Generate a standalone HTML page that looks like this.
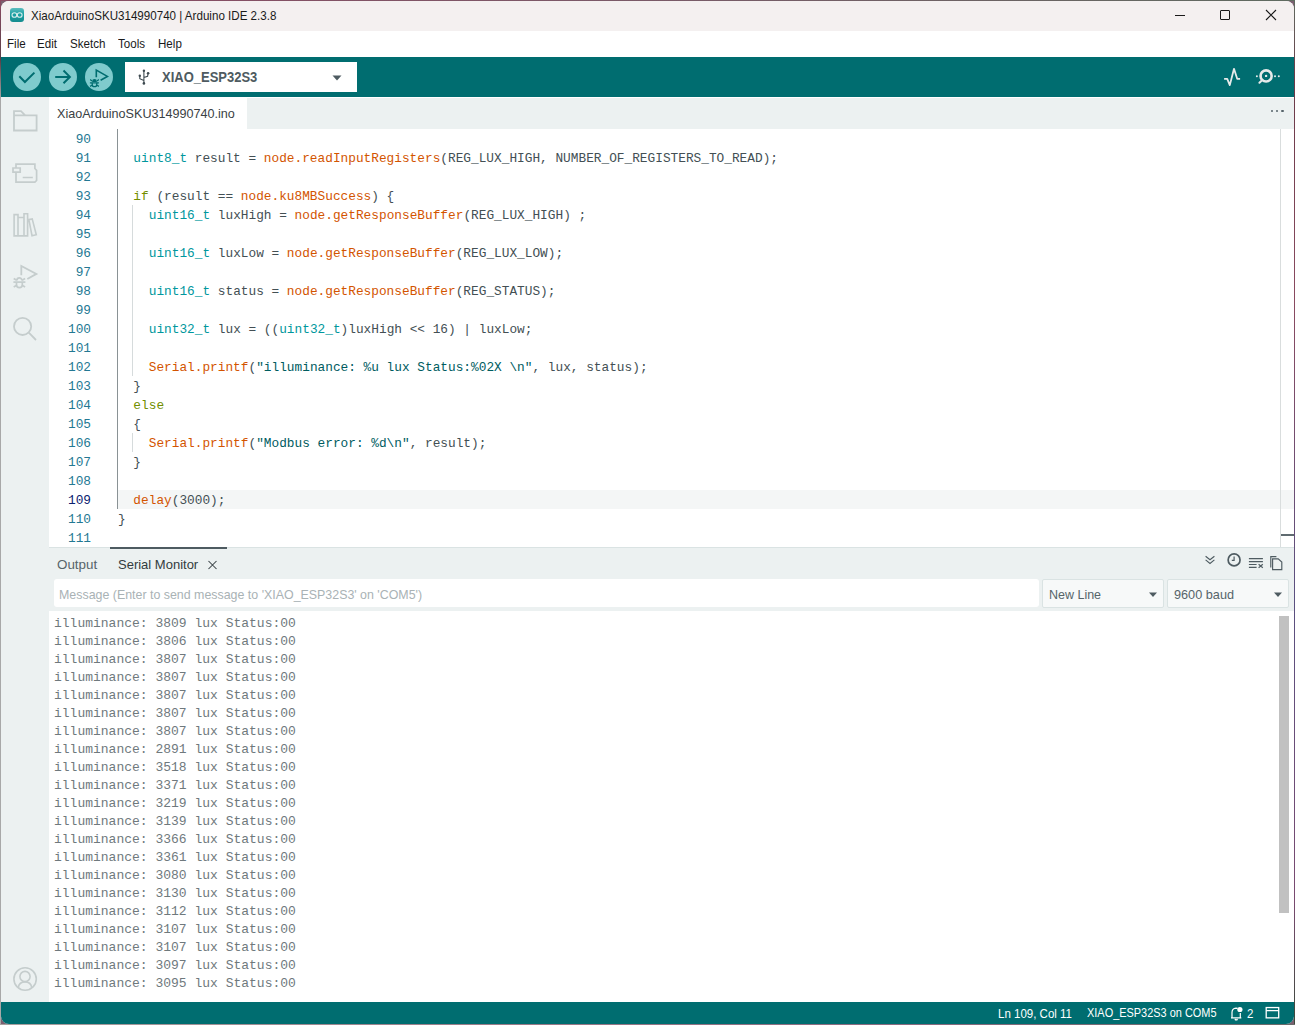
<!DOCTYPE html>
<html><head><meta charset="utf-8">
<style>
*{margin:0;padding:0;box-sizing:border-box}
html,body{width:1295px;height:1025px;overflow:hidden}
body{background:#7a6070;font-family:"Liberation Sans",sans-serif;position:relative}
.a{position:absolute}
#win{position:absolute;left:0;top:0;width:1295px;height:1025px;clip-path:inset(1px 1px 1px 1px round 8px);background:#fff}
#title{left:0;top:0;width:1295px;height:31px;background:#f4f0f0}
#menu{left:0;top:31px;width:1295px;height:26px;background:#fff}
#toolbar{left:0;top:57px;width:1295px;height:40px;background:#006d70}
#side{left:0;top:97px;width:49px;height:905px;background:#ecf1f1}
#tabbar{left:49px;top:98px;width:1246px;height:31px;background:#ecf1f1}
#editor{left:49px;top:129px;width:1246px;height:418px;background:#fff}
#panel{left:49px;top:547px;width:1246px;height:64px;background:#ecf1f1;border-top:1px solid #dae3e3}
#serial{left:50px;top:611px;width:1245px;height:391px;background:#fff}
#status{left:0;top:1002px;width:1295px;height:23px;background:#006d70}
.mono{font-family:"Liberation Mono",monospace}
.t{white-space:pre;line-height:1}
.ln{height:19px;line-height:19px;font-size:13.4px;text-align:right;color:#237893;padding-top:0.7px}
.ln.cur{color:#0b216f}
.cl{height:19px;line-height:19px;font-size:13.4px;white-space:pre;color:#434f54;padding-top:0.7px}
.ty{color:#00979d}.fn{color:#d35400}.kw{color:#728e00}.st{color:#005c5f}
.sl{height:18px;line-height:18px;font-size:13px;white-space:pre;color:#6f797d}
</style></head><body>
<div class="a" style="left:0;top:0;width:1px;height:1025px;background:linear-gradient(180deg,#8a4a62 0px,#5a4048 60px,#a8a8a8 100px,#a8a8a8 100%)"></div>
<div class="a" style="left:0;top:0;width:1295px;height:1px;background:linear-gradient(90deg,#8a4a62,#7a5a68 50%,#5f6b60)"></div>
<div class="a" style="left:1294px;top:0;width:1px;height:1025px;background:linear-gradient(180deg,#5f6b60 0px,#6a3a48 80px,#8a4a60 300px,#5a5080 600px,#7a4a70 900px,#3a4a3a 1025px)"></div>
<div class="a" style="left:0;top:1024px;width:1295px;height:1px;background:linear-gradient(90deg,#a8a0a0,#9a7a88 40%,#8a6a80 70%,#6a6a6a)"></div>
<div id="win">
  <div class="a" id="title">
    <!-- arduino icon -->
    <div class="a" style="left:10px;top:8px;width:14px;height:14px;border-radius:3px;background:linear-gradient(#5dbcbe,#1ba0a3 45%,#168c8f)"></div>
    <svg class="a" style="left:10px;top:8px" width="14" height="14" viewBox="0 0 14 14"><g fill="none" stroke="#d5eded" stroke-width="1.1"><ellipse cx="4.4" cy="7" rx="2.4" ry="2.3"/><ellipse cx="9.7" cy="7" rx="2.4" ry="2.3"/></g></svg>
    <div class="a t" style="left:31px;top:8.5px;font-size:13.3px;transform:scaleX(0.872);transform-origin:0 0;color:#1a1a1a">XiaoArduinoSKU314990740 | Arduino IDE 2.3.8</div>
    <!-- window controls -->
    <div class="a" style="left:1175px;top:15px;width:10px;height:1px;background:#1a1a1a"></div>
    <div class="a" style="left:1220px;top:10px;width:10px;height:10px;border:1px solid #1a1a1a;border-radius:1px"></div>
    <svg class="a" style="left:1265px;top:9px" width="12" height="12" viewBox="0 0 12 12"><path d="M1 1L11 11M11 1L1 11" stroke="#1a1a1a" stroke-width="1.1"/></svg>
  </div>
  <div class="a" id="menu">
    <div class="a t" style="left:7px;top:5.8px;font-size:13.2px;transform:scaleX(0.879);transform-origin:0 0;color:#1a1a1a">File</div>
    <div class="a t" style="left:37px;top:5.8px;font-size:13.2px;transform:scaleX(0.879);transform-origin:0 0;color:#1a1a1a">Edit</div>
    <div class="a t" style="left:70px;top:5.8px;font-size:13.2px;transform:scaleX(0.879);transform-origin:0 0;color:#1a1a1a">Sketch</div>
    <div class="a t" style="left:118px;top:5.8px;font-size:13.2px;transform:scaleX(0.879);transform-origin:0 0;color:#1a1a1a">Tools</div>
    <div class="a t" style="left:158px;top:5.8px;font-size:13.2px;transform:scaleX(0.879);transform-origin:0 0;color:#1a1a1a">Help</div>
  </div>
  <div class="a" id="toolbar">

    <div class="a" style="left:13px;top:6px;width:28px;height:28px;border-radius:50%;background:#7fcbcd"></div>
    <div class="a" style="left:49px;top:6px;width:28px;height:28px;border-radius:50%;background:#7fcbcd"></div>
    <div class="a" style="left:85px;top:6px;width:28px;height:28px;border-radius:50%;background:#7fcbcd"></div>
    <svg class="a" style="left:0;top:0" width="130" height="40" viewBox="0 57 130 40">
      <path d="M19.3 76.3L24.9 82L34.4 72.6" fill="none" stroke="#006d70" stroke-width="2"/>
      <path d="M55.2 76.9H70.2M63.5 70.5L69.9 76.9L63.5 83.3" fill="none" stroke="#006d70" stroke-width="2"/>
      <path d="M96.3 77.3V70.1L107.4 76.4L100.6 80.3" fill="none" stroke="#006d70" stroke-width="1.6" stroke-linejoin="miter"/>
      <g fill="none" stroke="#006d70" stroke-width="1.3">
        <path d="M92.8 81.4A1.7 1.7 0 0 1 96.2 81.4Z" fill="#006d70"/>
        <path d="M89.9 82.8H98.9"/>
        <path d="M92.2 82.8V84.4A2.3 2.3 0 0 0 96.8 84.4V82.8"/>
        <path d="M90.2 79.6L91.9 81M98.8 79.6L97.1 81M90.1 86.4L92 85.2M98.9 86.4L97 85.2"/>
      </g>
    </svg>
    <div class="a" style="left:125px;top:5px;width:232px;height:30px;background:#fff"></div>
    <svg class="a" style="left:137px;top:12px" width="14" height="16" viewBox="0 0 14 16"><g fill="none" stroke="#3e4a50" stroke-width="1.1"><path d="M6.9 1.6V14.4M2.8 6.8V9.7L6.9 11.6M11.1 4.2L10.6 7.3L6.9 8.6"/></g><g fill="#3e4a50"><circle cx="6.9" cy="1.7" r="1.2"/><circle cx="6.9" cy="14.4" r="1.3"/><circle cx="2.8" cy="6.8" r="1.2"/><circle cx="11.1" cy="4.3" r="1.3"/></g></svg>
    <div class="a t" style="left:162px;top:13.8px;font-size:13.9px;font-weight:700;transform:scaleX(0.935);transform-origin:0 0;color:#4e5b61">XIAO_ESP32S3</div>
    <svg class="a" style="left:332px;top:18px" width="10" height="6" viewBox="0 0 10 6"><path d="M0.5 0.5H9.5L5 5.5Z" fill="#4e5b61"/></svg>
    <svg class="a" style="left:1220px;top:9px" width="24" height="22" viewBox="0 0 24 22"><path d="M4.1 12.8H7.2L9.8 19.1L14 2.8L17.2 12.8H20.1" fill="none" stroke="#e6eaea" stroke-width="1.8" stroke-linejoin="round" stroke-linecap="butt"/></svg>
    <svg class="a" style="left:1252px;top:9px" width="32" height="22" viewBox="0 0 32 22"><g fill="none" stroke="#e6eaea"><circle cx="14.1" cy="9.9" r="5.55" stroke-width="2.6"/><path d="M10.3 14L7.4 16.8" stroke-width="2" stroke-linecap="round"/></g><g fill="#e6eaea"><circle cx="14.1" cy="9.9" r="1.2"/><circle cx="4.9" cy="10.3" r="1"/><circle cx="23" cy="10.3" r="1"/><circle cx="26.8" cy="10.3" r="1"/></g></svg>
  </div>
  <div class="a" id="side">

    <svg class="a" style="left:0;top:0" width="49" height="905" viewBox="0 97 49 905">
      <g fill="none" stroke="#c5cdcd" stroke-width="2" stroke-linejoin="miter">
        <path d="M14 130.5V111.1H21L25.2 115.3H36.6V130.5Z M14 115.3H25.2" stroke-width="1.8"/>
        <path d="M16 167.8V164.1H34.9V168.5L36.6 170.3V180.5L34.9 182.2H16V172.1 M13 168H20.2V172.1H13Z M22.7 177.5H32.8" stroke-width="1.7"/>
        <path d="M14.1 235.9V214.6H18V235.9Z M18 217.5H24V235.9H14.1 M24 235.9V213.8H27.6V235.9Z M28.9 219.6L32.2 218.9L36.3 234.7L32 235.7Z" stroke-width="1.6"/>
        <path d="M14.5 341" stroke="none"/>
        <circle cx="22.6" cy="326.4" r="8.6" stroke-width="1.8"/>
        <path d="M28.8 332.6L36 340" stroke-width="1.8"/>
      </g>
      <g fill="none" stroke="#c5cdcd" stroke-width="1.8">
        <path d="M21.3 275.3V265.9L36.4 273.9L27.3 279"/>
      </g>
      <g fill="none" stroke="#c5cdcd" stroke-width="1.7">
        <path d="M16.9 280.4A2.5 2.5 0 0 1 21.9 280.4"/>
        <path d="M13.4 282.1H25.4"/>
        <path d="M16.5 282.1V284.7A2.9 2.9 0 0 0 22.3 284.7V282.1"/>
        <path d="M13.7 278.5L16.7 280.3M25.1 278.5L22.1 280.3M13.7 287L16.7 285.3M25.1 287L22.1 285.3"/>
      </g>
      <g fill="none" stroke="#c5cdcd" stroke-width="1.6">
        <circle cx="25.1" cy="979" r="11.2"/>
        <circle cx="25" cy="976.5" r="5.1"/>
        <path d="M18.2 987.6C19 983.5 21.5 981.9 25 981.9C28.5 981.9 31 983.5 31.8 987.6"/>
      </g>
    </svg>
  </div>
  <div class="a" id="tabbar">

    <div class="a" style="left:0;top:-1px;width:198px;height:32px;background:#fff"></div>
    <div class="a t" style="left:8px;top:10px;font-size:12.6px;color:#3a4144">XiaoArduinoSKU314990740.ino</div>
    <div class="a" style="left:1222px;top:12.2px;width:2.2px;height:2.2px;border-radius:50%;background:#56636a"></div>
    <div class="a" style="left:1227.2px;top:12.2px;width:2.2px;height:2.2px;border-radius:50%;background:#56636a"></div>
    <div class="a" style="left:1232.4px;top:12.2px;width:2.2px;height:2.2px;border-radius:50%;background:#56636a"></div>
  </div>
  <div class="a" id="editor">

    <div class="a" style="left:69px;top:361px;width:1177px;height:19px;background:#f4f6f6"></div>
    <div class="a" style="left:68px;top:0;width:1px;height:380px;background:#8a9295"></div>
    <div class="a" style="left:83px;top:76px;width:1px;height:171px;background:#d6dbdc"></div>
    <div class="a" style="left:83px;top:304px;width:1px;height:19px;background:#d6dbdc"></div>
    <div class="a" style="left:1231px;top:0;width:1px;height:418px;background:#d9dddd"></div>
    <div class="a" style="left:1232px;top:405px;width:14px;height:2px;background:#5f6b70"></div>
    <div class="a mono" id="lnums" style="left:0;top:0;width:42px;transform:scaleX(0.955);transform-origin:100% 0">
<div class="ln">90</div>
<div class="ln">91</div>
<div class="ln">92</div>
<div class="ln">93</div>
<div class="ln">94</div>
<div class="ln">95</div>
<div class="ln">96</div>
<div class="ln">97</div>
<div class="ln">98</div>
<div class="ln">99</div>
<div class="ln">100</div>
<div class="ln">101</div>
<div class="ln">102</div>
<div class="ln">103</div>
<div class="ln">104</div>
<div class="ln">105</div>
<div class="ln">106</div>
<div class="ln">107</div>
<div class="ln">108</div>
<div class="ln cur">109</div>
<div class="ln">110</div>
<div class="ln">111</div>
    </div>
    <div class="a mono" id="code" style="left:68.5px;top:0;transform:scaleX(0.955);transform-origin:0 0">
<div class="cl"></div>
<div class="cl">  <span class="ty">uint8_t</span> result = <span class="fn">node.readInputRegisters</span>(REG_LUX_HIGH, NUMBER_OF_REGISTERS_TO_READ);</div>
<div class="cl"></div>
<div class="cl">  <span class="kw">if</span> (result == <span class="fn">node.ku8MBSuccess</span>) {</div>
<div class="cl">    <span class="ty">uint16_t</span> luxHigh = <span class="fn">node.getResponseBuffer</span>(REG_LUX_HIGH) ;</div>
<div class="cl"></div>
<div class="cl">    <span class="ty">uint16_t</span> luxLow = <span class="fn">node.getResponseBuffer</span>(REG_LUX_LOW);</div>
<div class="cl"></div>
<div class="cl">    <span class="ty">uint16_t</span> status = <span class="fn">node.getResponseBuffer</span>(REG_STATUS);</div>
<div class="cl"></div>
<div class="cl">    <span class="ty">uint32_t</span> lux = ((<span class="ty">uint32_t</span>)luxHigh &lt;&lt; 16) | luxLow;</div>
<div class="cl"></div>
<div class="cl">    <span class="fn">Serial.printf</span>(<span class="st">"illuminance: %u lux Status:%02X \n"</span>, lux, status);</div>
<div class="cl">  }</div>
<div class="cl">  <span class="kw">else</span></div>
<div class="cl">  {</div>
<div class="cl">    <span class="fn">Serial.printf</span>(<span class="st">"Modbus error: %d\n"</span>, result);</div>
<div class="cl">  }</div>
<div class="cl"></div>
<div class="cl">  <span class="fn">delay</span>(3000);</div>
<div class="cl">}</div>
<div class="cl"></div>
    </div>
  </div>
  <div class="a" id="panel">

    <div class="a" style="left:61px;top:-1px;width:117px;height:2px;background:#4e5b61"></div>
    <div class="a t" style="left:8px;top:10px;font-size:13.4px;color:#56646a">Output</div>
    <div class="a t" style="left:69px;top:10.4px;font-size:13px;color:#333c40">Serial Monitor</div>
    <svg class="a" style="left:158px;top:11px" width="11" height="11" viewBox="0 0 11 11"><path d="M1.5 2L9.5 10M9.5 2L1.5 10" stroke="#333c40" stroke-width="1.05"/></svg>
    <div class="a" style="left:5px;top:31px;width:985px;height:28px;background:#fff;border-radius:3px"></div>
    <div class="a t" style="left:10px;top:40.2px;font-size:13.1px;transform:scaleX(0.947);transform-origin:0 0;color:#a9b2b5">Message (Enter to send message to 'XIAO_ESP32S3' on 'COM5')</div>
    <div class="a" style="left:993px;top:31px;width:122px;height:29px;background:#f7f9f9;border:1px solid #dae3e3;border-radius:2px"></div>
    <div class="a t" style="left:1000px;top:40.2px;font-size:13.2px;transform:scaleX(0.947);transform-origin:0 0;color:#56646a">New Line</div>
    <svg class="a" style="left:1099px;top:44px" width="10" height="6" viewBox="0 0 10 6"><path d="M1 0.5H9L5 5Z" fill="#4e5b61"/></svg>
    <div class="a" style="left:1118px;top:31px;width:122px;height:29px;background:#f7f9f9;border:1px solid #dae3e3;border-radius:2px"></div>
    <div class="a t" style="left:1125px;top:40.2px;font-size:13.4px;transform:scaleX(0.948);transform-origin:0 0;color:#56646a">9600 baud</div>
    <svg class="a" style="left:1224px;top:44px" width="10" height="6" viewBox="0 0 10 6"><path d="M1 0.5H9L5 5Z" fill="#4e5b61"/></svg>
    <svg class="a" style="left:1150px;top:0" width="96" height="25" viewBox="1199 548 96 25">
      <g fill="none" stroke="#4e5b61" stroke-width="1.15">
        <path d="M1205.6 556.3L1210 559.8L1214.4 556.3M1205.6 559.9L1210 563.4L1214.4 559.9"/>
        <circle cx="1234.1" cy="559.9" r="5.95" stroke-width="1.7"/>
        <path d="M1234.1 556.6V560.4H1231.8" stroke-width="1.2"/>
        <path d="M1248.9 558.6H1262.9M1248.9 561.6H1262.9M1248.9 564.5H1256.6M1248.9 567.4H1256.6"/>
        <path d="M1258.6 564.2L1262.8 567.8M1262.8 564.2L1258.6 567.8"/>
        <path d="M1270.8 567.4V556.6H1276.4M1272.6 569.6V558.8H1278.2L1281.8 562V569.6Z"/>
      </g>
    </svg>
  </div>
  <div class="a" id="serial">

    <div class="a mono" style="left:4px;top:4px">
<div class="sl">illuminance: 3809 lux Status:00</div>
<div class="sl">illuminance: 3806 lux Status:00</div>
<div class="sl">illuminance: 3807 lux Status:00</div>
<div class="sl">illuminance: 3807 lux Status:00</div>
<div class="sl">illuminance: 3807 lux Status:00</div>
<div class="sl">illuminance: 3807 lux Status:00</div>
<div class="sl">illuminance: 3807 lux Status:00</div>
<div class="sl">illuminance: 2891 lux Status:00</div>
<div class="sl">illuminance: 3518 lux Status:00</div>
<div class="sl">illuminance: 3371 lux Status:00</div>
<div class="sl">illuminance: 3219 lux Status:00</div>
<div class="sl">illuminance: 3139 lux Status:00</div>
<div class="sl">illuminance: 3366 lux Status:00</div>
<div class="sl">illuminance: 3361 lux Status:00</div>
<div class="sl">illuminance: 3080 lux Status:00</div>
<div class="sl">illuminance: 3130 lux Status:00</div>
<div class="sl">illuminance: 3112 lux Status:00</div>
<div class="sl">illuminance: 3107 lux Status:00</div>
<div class="sl">illuminance: 3107 lux Status:00</div>
<div class="sl">illuminance: 3097 lux Status:00</div>
<div class="sl">illuminance: 3095 lux Status:00</div>
    </div>
    <div class="a" style="left:1229px;top:5px;width:10px;height:297px;background:#c1c1c1"></div>
  </div>
  <div class="a" id="status">

    <div class="a t" style="left:998px;top:4.9px;font-size:13px;transform:scaleX(0.885);transform-origin:0 0;color:#fff">Ln 109, Col 11</div>
    <div class="a t" style="left:1087px;top:5.4px;font-size:12.4px;transform:scaleX(0.883);transform-origin:0 0;color:#fff">XIAO_ESP32S3 on COM5</div>
    <svg class="a" style="left:1228px;top:2px" width="18" height="18" viewBox="0 0 18 18"><g fill="none" stroke="#fff" stroke-width="1.2"><path d="M4 13.5V8.5Q4 4.5 8 4.2Q9 4.2 9.6 4.4M12.3 9V13.5M3 13.8H13.3M6.8 15.3Q8.2 16.6 9.6 15.3"/></g><circle cx="11.9" cy="5.5" r="2.6" fill="#fff"/></svg>
    <div class="a t" style="left:1247px;top:4.9px;font-size:13px;transform:scaleX(0.885);transform-origin:0 0;color:#fff">2</div>
    <svg class="a" style="left:1264px;top:3px" width="17" height="16" viewBox="0 0 17 16"><g fill="none" stroke="#fff" stroke-width="1.3"><rect x="2.2" y="2.55" width="12.5" height="10.3"/><path d="M2.2 5.6H14.7"/></g></svg>
  </div>
</div>
</body></html>
